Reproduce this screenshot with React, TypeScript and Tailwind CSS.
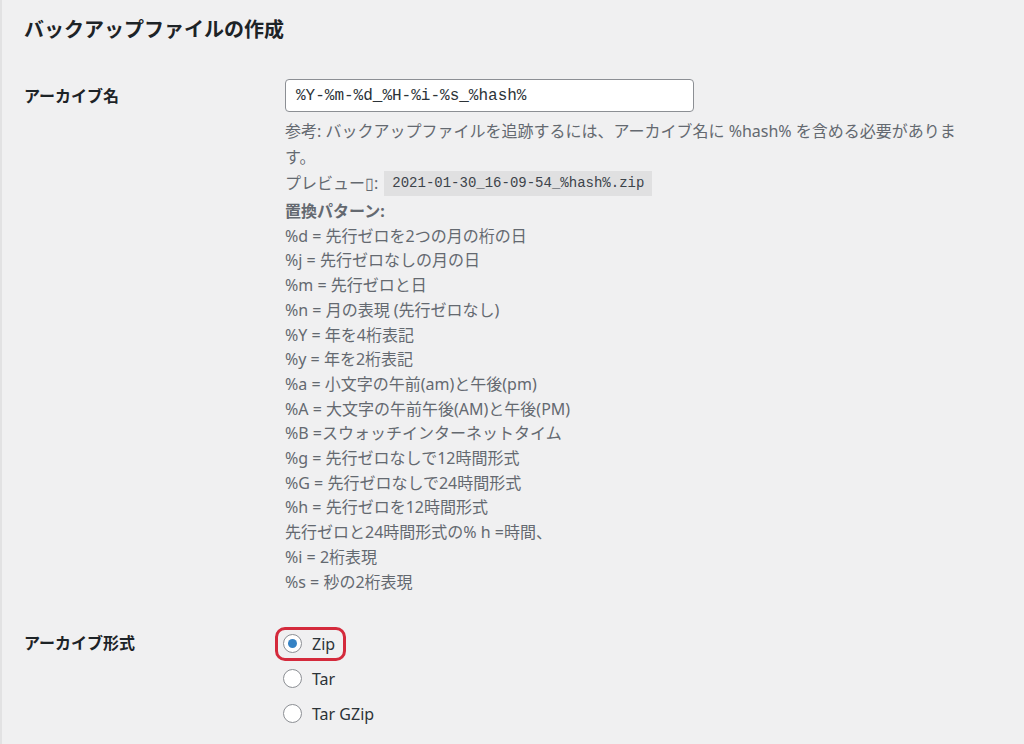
import React from "react";

const patterns = [
  "%d = 先行ゼロを2つの月の桁の日",
  "%j = 先行ゼロなしの月の日",
  "%m = 先行ゼロと日",
  "%n = 月の表現 (先行ゼロなし)",
  "%Y = 年を4桁表記",
  "%y = 年を2桁表記",
  "%a = 小文字の午前(am)と午後(pm)",
  "%A = 大文字の午前午後(AM)と午後(PM)",
  "%B =スウォッチインターネットタイム",
  "%g = 先行ゼロなしで12時間形式",
  "%G = 先行ゼロなしで24時間形式",
  "%h = 先行ゼロを12時間形式",
  "先行ゼロと24時間形式の% h =時間、",
  "%i = 2桁表現",
  "%s = 秒の2桁表現",
];

const formats = [
  { label: "Zip", checked: true },
  { label: "Tar", checked: false },
  { label: "Tar GZip", checked: false },
];

const App = () => {
  return (
    <div className="min-h-[744px] w-[1024px] bg-[#f0f0f1] border-l-2 border-[#e2e2e3] pl-[22px] pt-[16px] font-[Noto_Sans,Noto_Sans_CJK_JP,sans-serif] text-[#1d2327]">
      <h2 className="text-[20px] leading-[28px] font-bold">バックアップファイルの作成</h2>

      {/* archive name */}
      <div className="flex mt-[35px]">
        <div className="w-[261px] shrink-0 pt-[5px] text-[16px] leading-[24px] font-bold">
          アーカイブ名
        </div>
        <div className="flex flex-col">
          <div className="w-[409px] h-[33px] bg-white border border-[#8c8f94] rounded-[4px] flex items-center pl-[10px] font-[Liberation_Mono,monospace] text-[16px] text-[#2c3338]">
            %Y-%m-%d_%H-%i-%s_%hash%
          </div>
          <div className="text-[16px] text-[#646970]">
            <p className="mt-[6px] leading-[26px] whitespace-nowrap">
              参考: バックアップファイルを追跡するには、アーカイブ名に %hash% を含める必要がありま
              <br />
              す。
            </p>
            <p className="leading-[27px] flex items-center">
              <span>プレビュー▯:</span>
              <code className="ml-[6px] bg-[#e0e0e1] h-[25px] px-[8px] flex items-center font-[Liberation_Mono,monospace] text-[14px] text-[#3c434a]">
                2021-01-30_16-09-54_%hash%.zip
              </code>
            </p>
            <div className="mt-[2px] leading-[24.7px]">
              <p className="font-bold">置換パターン:</p>
              {patterns.map((p) => (
                <p key={p}>{p}</p>
              ))}
            </div>
          </div>
        </div>
      </div>

      {/* archive format */}
      <div className="flex mt-[32px]">
        <div className="w-[261px] shrink-0 pt-[5px] text-[16px] leading-[24px] font-bold">
          アーカイブ形式
        </div>
        <div className="flex flex-col">
          {formats.map((f) => (
            <div key={f.label} className="h-[35px] flex items-center">
              <label
                className={
                  f.checked
                    ? "-ml-[10px] h-[34px] flex items-center gap-[10px] pl-[5px] pr-[8px] border-[3px] border-[#d42a3c] rounded-[10px]"
                    : "-ml-[10px] h-[34px] flex items-center gap-[10px] pl-[5px] pr-[8px] border-[3px] border-transparent rounded-[10px]"
                }
              >
                <span className="w-[19px] h-[19px] rounded-full border border-[#8c8f94] bg-white flex items-center justify-center">
                  {f.checked && <span className="w-[9px] h-[9px] rounded-full bg-[#3582c4]" />}
                </span>
                <span className="text-[16px] text-[#2c3338]">{f.label}</span>
              </label>
            </div>
          ))}
        </div>
      </div>
    </div>
  );
};

export default App;
